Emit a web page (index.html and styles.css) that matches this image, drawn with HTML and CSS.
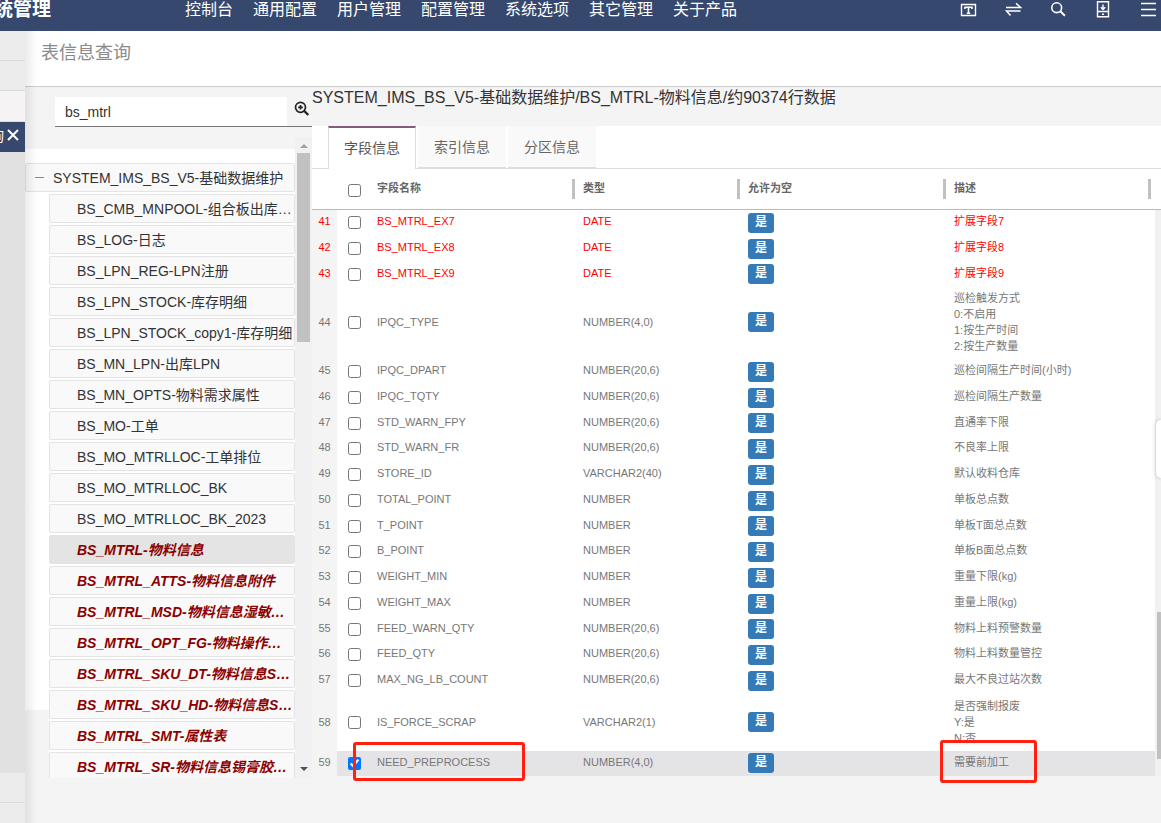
FILE: index.html
```html
<!DOCTYPE html>
<html lang="zh-CN">
<head>
<meta charset="utf-8">
<title>表信息查询</title>
<link rel="stylesheet" href="styles.css">
</head>
<body>
<header class="topbar">
  <div class="brand">统管理</div>
  <nav class="menu">
    <a href="#">控制台</a><a href="#">通用配置</a><a href="#">用户管理</a><a href="#">配置管理</a><a href="#">系统选项</a><a href="#">其它管理</a><a href="#">关于产品</a>
  </nav>
  <div class="tools">
    <button type="button" aria-label="主题"><svg viewBox="0 0 18 18"><path d="M2.5 3.5h14v11h-14z" stroke-width="1.4"/><path d="M6 8V6.3h7V8M9.5 6.3v6.2M7.8 12.3h3.4" stroke-width="1.6"/></svg></button>
    <button type="button" aria-label="切换"><svg viewBox="0 0 18 18"><path d="M2 6.5h14.5L12 2.3M16.5 10H2.5l4 4.4" stroke-width="1.5"/></svg></button>
    <button type="button" aria-label="搜索"><svg viewBox="0 0 18 18"><circle cx="7.7" cy="6.7" r="4.9" stroke-width="1.6"/><path d="M11.3 10.3l4.6 4.4" stroke-width="1.9"/></svg></button>
    <button type="button" aria-label="下载"><svg viewBox="0 0 18 18"><path d="M3.5.7h11v15.1h-11zM3 10.5h12" stroke-width="1.4"/><path d="M9 3.5v5M6.8 6.2L9 8.4l2.2-2.2M8 13.2h2" stroke-width="1.4"/></svg></button>
    <button type="button" aria-label="菜单"><svg viewBox="0 0 18 18"><path d="M2 2.5h15M2 8.5h15M2 14.5h15" stroke-width="1.4"/></svg></button>
  </div>
</header>
<div class="shell">
  <aside class="rail">
    <div class="rail-item"></div>
    <div class="rail-item"></div>
    <div class="rail-item pale"></div>
    <div class="rail-item current"><span>询</span><button type="button" aria-label="关闭"><svg viewBox="0 0 12 12"><path d="M1 1l10 10M11 1L1 11"/></svg></button></div>
    <div class="rail-fill"></div>
    <div class="rail-item"></div>
    <div class="rail-item last"></div>
  </aside>
  <main class="main">
    <h1 class="page-title">表信息查询</h1>
    <div class="content">
      <section class="side">
        <form class="search">
          <input type="text" value="bs_mtrl" aria-label="表名">
          <button type="button" aria-label="查询"><svg viewBox="0 0 16 16"><circle cx="6.5" cy="6.3" r="5" stroke-width="1.7"/><path d="M10.3 10l4 4" stroke-width="2.4"/><path d="M6.5 4v4.6M4.2 6.3h4.6" stroke-width="1.7"/></svg></button>
        </form>
        <div class="tree-wrap">
          <div class="tree">
            <div class="node root"><span class="minus"></span>SYSTEM_IMS_BS_V5-基础数据维护</div>
            <ul class="children">
              <li class="node">BS_CMB_MNPOOL-组合板出库明细</li>
              <li class="node">BS_LOG-日志</li>
              <li class="node">BS_LPN_REG-LPN注册</li>
              <li class="node">BS_LPN_STOCK-库存明细</li>
              <li class="node">BS_LPN_STOCK_copy1-库存明细</li>
              <li class="node">BS_MN_LPN-出库LPN</li>
              <li class="node">BS_MN_OPTS-物料需求属性</li>
              <li class="node">BS_MO-工单</li>
              <li class="node">BS_MO_MTRLLOC-工单排位</li>
              <li class="node">BS_MO_MTRLLOC_BK</li>
              <li class="node">BS_MO_MTRLLOC_BK_2023</li>
              <li class="node hit active">BS_MTRL-物料信息</li>
              <li class="node hit">BS_MTRL_ATTS-物料信息附件</li>
              <li class="node hit">BS_MTRL_MSD-物料信息湿敏元件</li>
              <li class="node hit">BS_MTRL_OPT_FG-物料操作标识</li>
              <li class="node hit">BS_MTRL_SKU_DT-物料信息SKU</li>
              <li class="node hit">BS_MTRL_SKU_HD-物料信息SKU</li>
              <li class="node hit">BS_MTRL_SMT-属性表</li>
              <li class="node hit">BS_MTRL_SR-物料信息锡膏胶水红</li>
            </ul>
          </div>
          <div class="bar"><i class="up"></i><i class="thumb"></i><i class="down"></i></div>
        </div>
      </section>
      <section class="detail">
        <h2 class="path">SYSTEM_IMS_BS_V5-基础数据维护/BS_MTRL-物料信息/约90374行数据</h2>
        <div class="tabs">
          <button type="button" class="tab on">字段信息</button>
          <button type="button" class="tab">索引信息</button>
          <button type="button" class="tab">分区信息</button>
        </div>
        <div class="grid">
          <table>
            <colgroup><col class="c-no"><col class="c-check"><col class="c-name"><col class="c-type"><col class="c-null"><col></colgroup>
            <thead><tr><th></th><th class="ck"><input type="checkbox" aria-label="全选"></th><th class="sep">字段名称</th><th class="sep">类型</th><th class="sep">允许为空</th><th class="sep end">描述</th></tr></thead>
            <tbody>
              <tr class="red"><td>41</td><td class="ck"><input type="checkbox" aria-label="41"></td><td>BS_MTRL_EX7</td><td>DATE</td><td><span class="yes">是</span></td><td>扩展字段7</td></tr>
              <tr class="red"><td>42</td><td class="ck"><input type="checkbox" aria-label="42"></td><td>BS_MTRL_EX8</td><td>DATE</td><td><span class="yes">是</span></td><td>扩展字段8</td></tr>
              <tr class="red"><td>43</td><td class="ck"><input type="checkbox" aria-label="43"></td><td>BS_MTRL_EX9</td><td>DATE</td><td><span class="yes">是</span></td><td>扩展字段9</td></tr>
              <tr class="four"><td>44</td><td class="ck"><input type="checkbox" aria-label="44"></td><td>IPQC_TYPE</td><td>NUMBER(4,0)</td><td><span class="yes">是</span></td><td>巡检触发方式<br>0:不启用<br>1:按生产时间<br>2:按生产数量</td></tr>
              <tr><td>45</td><td class="ck"><input type="checkbox" aria-label="45"></td><td>IPQC_DPART</td><td>NUMBER(20,6)</td><td><span class="yes">是</span></td><td>巡检间隔生产时间(小时)</td></tr>
              <tr><td>46</td><td class="ck"><input type="checkbox" aria-label="46"></td><td>IPQC_TQTY</td><td>NUMBER(20,6)</td><td><span class="yes">是</span></td><td>巡检间隔生产数量</td></tr>
              <tr><td>47</td><td class="ck"><input type="checkbox" aria-label="47"></td><td>STD_WARN_FPY</td><td>NUMBER(20,6)</td><td><span class="yes">是</span></td><td>直通率下限</td></tr>
              <tr><td>48</td><td class="ck"><input type="checkbox" aria-label="48"></td><td>STD_WARN_FR</td><td>NUMBER(20,6)</td><td><span class="yes">是</span></td><td>不良率上限</td></tr>
              <tr><td>49</td><td class="ck"><input type="checkbox" aria-label="49"></td><td>STORE_ID</td><td>VARCHAR2(40)</td><td><span class="yes">是</span></td><td>默认收料仓库</td></tr>
              <tr><td>50</td><td class="ck"><input type="checkbox" aria-label="50"></td><td>TOTAL_POINT</td><td>NUMBER</td><td><span class="yes">是</span></td><td>单板总点数</td></tr>
              <tr><td>51</td><td class="ck"><input type="checkbox" aria-label="51"></td><td>T_POINT</td><td>NUMBER</td><td><span class="yes">是</span></td><td>单板T面总点数</td></tr>
              <tr><td>52</td><td class="ck"><input type="checkbox" aria-label="52"></td><td>B_POINT</td><td>NUMBER</td><td><span class="yes">是</span></td><td>单板B面总点数</td></tr>
              <tr><td>53</td><td class="ck"><input type="checkbox" aria-label="53"></td><td>WEIGHT_MIN</td><td>NUMBER</td><td><span class="yes">是</span></td><td>重量下限(kg)</td></tr>
              <tr><td>54</td><td class="ck"><input type="checkbox" aria-label="54"></td><td>WEIGHT_MAX</td><td>NUMBER</td><td><span class="yes">是</span></td><td>重量上限(kg)</td></tr>
              <tr><td>55</td><td class="ck"><input type="checkbox" aria-label="55"></td><td>FEED_WARN_QTY</td><td>NUMBER(20,6)</td><td><span class="yes">是</span></td><td>物料上料预警数量</td></tr>
              <tr><td>56</td><td class="ck"><input type="checkbox" aria-label="56"></td><td>FEED_QTY</td><td>NUMBER(20,6)</td><td><span class="yes">是</span></td><td>物料上料数量管控</td></tr>
              <tr><td>57</td><td class="ck"><input type="checkbox" aria-label="57"></td><td>MAX_NG_LB_COUNT</td><td>NUMBER(20,6)</td><td><span class="yes">是</span></td><td>最大不良过站次数</td></tr>
              <tr class="three"><td>58</td><td class="ck"><input type="checkbox" aria-label="58"></td><td>IS_FORCE_SCRAP</td><td>VARCHAR2(1)</td><td><span class="yes">是</span></td><td>是否强制报废<br>Y:是<br>N:否</td></tr>
              <tr class="picked"><td>59</td><td class="ck"><input type="checkbox" aria-label="59" checked></td><td class="marked">NEED_PREPROCESS<span class="mark mark-name"></span></td><td>NUMBER(4,0)</td><td><span class="yes">是</span></td><td class="marked">需要前加工<span class="mark mark-desc"></span></td></tr>
            </tbody>
          </table>
          <div class="grid-bar"><div class="grid-bar-head"></div><div class="grid-track"><i></i></div></div>
        </div>
      </section>
    </div>
    <button type="button" class="handle" aria-label="展开"></button>
  </main>
</div>
</body>
</html>
```

FILE: styles.css
```css
* { box-sizing: border-box; }
body {
  margin: 0;
  height: 100vh;
  display: flex;
  flex-direction: column;
  overflow: hidden;
  background: #f4f4f4;
  color: #333;
  font-family: "Liberation Sans", "Noto Sans CJK SC", sans-serif;
  font-size: 14px;
}
button { margin: 0; padding: 0; border: 0; background: none; font: inherit; color: inherit; }
svg { display: block; fill: none; stroke: currentColor; }

/* top bar */
.topbar {
  flex: none;
  height: 31px;
  padding: 1px 4px 12px 0;
  display: flex;
  align-items: center;
  background: #36486e;
  color: #fff;
  white-space: nowrap;
  line-height: 18px;
}
.brand { width: 191px; margin-left: -6px; font-size: 19px; font-weight: bold; }
.menu { flex: 1; display: flex; gap: 20px; font-size: 16px; }
.menu a { color: inherit; text-decoration: none; }
.tools { display: flex; gap: 27px; }
.tools svg { width: 18px; height: 18px; }

.shell { flex: 1; min-height: 0; display: flex; }

/* left rail */
.rail { width: 25px; display: flex; flex-direction: column; background: #ececec; }
.rail-item { flex: none; height: 30px; border-bottom: 1px solid #dcdcdc; }
.rail-item.pale { height: 31px; background: #f5f3f3; }
.rail-item.current {
  height: 30px;
  padding: 0 6px 4px 0;
  display: flex;
  align-items: center;
  justify-content: flex-end;
  gap: 3px;
  border: 0;
  background: #36486e;
  color: #fff;
}
.rail-item.current svg { width: 12px; height: 12px; stroke-width: 2; }
.rail-fill { flex: 1; background: #e1e1e1; }
.rail-item.last { height: 20px; border: 0; }

/* main column */
.main { position: relative; flex: 1; min-width: 0; display: flex; flex-direction: column; }
.main::before {
  content: "";
  position: absolute;
  top: 0;
  bottom: 0;
  left: 0;
  width: 12px;
  background: linear-gradient(to right, rgba(0, 0, 0, .08), transparent);
}
.page-title {
  margin: 0;
  height: 56px;
  padding: 0 16px;
  border-bottom: 1px solid #ccc;
  background: #fff;
  color: #8a8a8a;
  font-size: 18px;
  font-weight: normal;
  line-height: 44px;
}
.content { flex: 1; min-height: 0; display: flex; }

/* search and tree */
.side { width: 287px; padding-bottom: 45px; display: flex; flex-direction: column; }
.search {
  flex: none;
  margin: 10px 0 10px 30px;
  height: 30px;
  display: flex;
  border-bottom: 1px solid #777;
}
.search input {
  flex: 1;
  min-width: 0;
  padding: 0 10px;
  border: 0;
  outline: 0;
  background: #fff;
  color: #333;
  font: inherit;
}
.search button { width: 25px; padding: 0 0 6px 7px; }
.search svg { width: 16px; height: 16px; color: #222; }
.tree-wrap { flex: 1; min-height: 0; display: flex; }
.tree {
  flex: 1;
  min-width: 0;
  margin-top: 12px;
  padding-top: 14px;
  overflow: hidden;
  background: linear-gradient(#fff, #fff) 0 0 / 100% 561px no-repeat;
}
.children { margin: 0 0 0 24px; padding: 0; list-style: none; background: #fff; }
.node {
  height: 29px;
  margin-bottom: 2px;
  padding-left: 27px;
  overflow: hidden;
  border: 1px solid #e4e4e4;
  border-radius: 2px;
  background: #f9f9f9;
  line-height: 28px;
  white-space: nowrap;
  text-overflow: ellipsis;
}
.root { display: flex; align-items: center; gap: 9px; padding-left: 9px; }
.minus { width: 9px; height: 1px; background: #888; }
.hit { color: #8b0000; font-weight: bold; font-style: italic; }
.active { background: #e4e4e4; }
.bar {
  width: 17px;
  padding: 7px 2px;
  display: flex;
  flex-direction: column;
  align-items: center;
  background: #f1f1f1;
}
.up { border: 4px solid transparent; border-top: 0; border-bottom-color: #a0a0a0; }
.down { margin-top: auto; border: 4px solid transparent; border-bottom: 0; border-top-color: #505050; }
.thumb { width: 13px; height: 189px; margin-top: 5px; background: #c1c1c1; }

/* details */
.detail { flex: 1; min-width: 0; }
.path { margin: 0; height: 39px; font-size: 16px; font-weight: normal; line-height: 22px; white-space: nowrap; }
.tabs {
  height: 43px;
  padding-left: 16px;
  display: flex;
  gap: 2px;
  background: #fff;
  border-bottom: 1px solid #ddd;
}
.tab {
  width: 88px;
  height: 42px;
  padding-bottom: 2px;
  border-bottom: 1px solid #ddd;
  background: #f9f9f9;
  color: #666;
}
.tab.on {
  height: 43px;
  padding-bottom: 4px;
  border: 1px solid #ddd;
  border-top: 2px solid #875a7b;
  border-bottom: 0;
  background: #fff;
  color: #555;
}
.grid { display: flex; }
table {
  flex: 1;
  min-width: 0;
  table-layout: fixed;
  border-collapse: separate;
  border-spacing: 0;
  background: #fff;
  color: #777;
  font-size: 11px;
  line-height: 16px;
}
.c-no { width: 25px; }
.c-check { width: 33px; }
.c-name { width: 206px; }
.c-type { width: 165px; }
.c-null { width: 206px; }
th, td { padding: 0 7px; text-align: left; white-space: nowrap; }
th { height: 41px; padding-bottom: 2px; border-bottom: 1px solid #bbb; color: #666; }
.sep { background: linear-gradient(#c1c1c1, #c1c1c1) right 1px top 10px / 3px 20px no-repeat; }
.sep.end { background-position: right 4px top 10px; }
tbody td { height: 26px; padding-bottom: 4px; }
tbody td:nth-child(5) { padding-bottom: 1px; }
tbody tr:nth-child(4n+3) td { height: 25px; }
tbody .four td { height: 72px; padding-bottom: 2px; }
tbody .three td { height: 57px; padding-bottom: 2px; }
tbody td:first-child { padding-left: 0; padding-right: 0; background: #f4f4f4; text-align: center; }
th.ck { padding: 2px 0 0 11px; }
tbody td.ck { padding: 0 0 1px 11px; }
.ck input { display: block; width: 13px; height: 13px; margin: 0; }
.red { color: #f00; }
.picked td { background: #e4e4e7; }
.yes {
  display: block;
  width: 26px;
  height: 20px;
  border-radius: 3px;
  background: #337ab7;
  color: #fff;
  font-size: 12px;
  font-weight: bold;
  line-height: 18px;
  text-align: center;
}
.marked { position: relative; }
.mark { position: absolute; border: 3px solid #ff2010; border-radius: 3px; }
.mark-name { top: -9px; left: -17px; width: 172px; height: 39px; }
.mark-desc { top: -11px; left: -7px; width: 97px; height: 43px; }
.grid-bar { width: 6px; display: flex; flex-direction: column; }
.grid-bar-head { height: 41px; border-bottom: 1px solid #bbb; background: #fff; }
.grid-track { flex: 1; padding: 402px 0 0 2px; background: #f1f1f1; }
.grid-track i { display: block; height: 147px; background: #c1c1c1; }
.handle {
  position: absolute;
  top: 389px;
  right: 0;
  width: 5px;
  height: 58px;
  border-radius: 5px 0 0 5px;
  background: #fff;
  box-shadow: 0 0 4px rgba(0, 0, 0, .25);
}
```
